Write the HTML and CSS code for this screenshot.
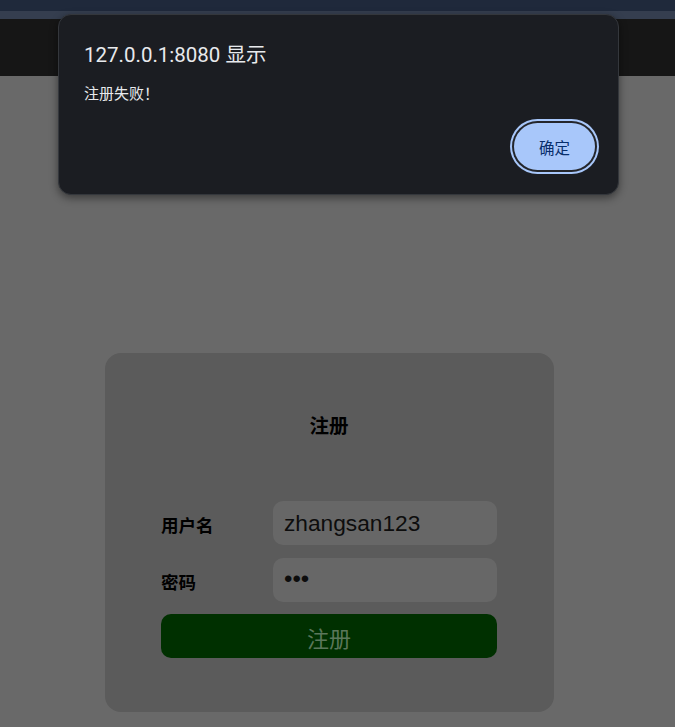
FILE: index.html
```html
<!DOCTYPE html>
<html lang="zh-CN">
<head>
<meta charset="utf-8">
<title>注册</title>
<link rel="stylesheet" href="styles.css">
</head>
<body>
  <div class="bar-top"></div>
  <div class="bar-mid"></div>
  <div class="bar-dark"></div>
  <main class="page">
    <section class="card">
      <h3 class="card-title">注册</h3>
      <div class="row">
        <label class="label">用户名</label>
        <div class="field">zhangsan123</div>
      </div>
      <div class="row">
        <label class="label">密码</label>
        <div class="field field-pass">•••</div>
      </div>
      <div class="submit">注册</div>
    </section>
  </main>

  <div class="dialog">
    <div class="dialog-title">127.0.0.1:8080 显示</div>
    <div class="dialog-msg">注册失败！</div>
    <div class="dialog-actions">
      <button class="ok">确定</button>
    </div>
  </div>
</body>
</html>
```

FILE: styles.css
```css
html, body {
  margin: 0;
  padding: 0;
}
body {
  width: 675px;
  height: 727px;
  overflow: hidden;
  background: #696969;
  font-family: "Liberation Sans", "Noto Sans CJK SC", sans-serif;
  position: relative;
}
.bar-top {
  height: 11px;
  background: #1f293b;
}
.bar-mid {
  height: 8px;
  background: #353e4f;
}
.bar-dark {
  height: 57px;
  background: #161616;
}
.page {
  height: 651px;
  background: #696969;
  padding-top: 277px;
  padding-left: 105px;
  box-sizing: border-box;
}
.card {
  width: 449px;
  height: 359px;
  box-sizing: border-box;
  background: #5b5b5b;
  border-radius: 16px;
  padding: 60px 57px 0 56px;
  display: flex;
  flex-direction: column;
}
.card-title {
  margin: 0 0 64px;
  text-align: center;
  font-family: "Noto Sans CJK SC", sans-serif;
  font-weight: 700;
  font-size: 19.5px;
  line-height: 24px;
  color: #000;
}
.row {
  display: flex;
  align-items: center;
  height: 44px;
  margin-bottom: 13px;
}
.label {
  width: 112px;
  font-family: "Noto Sans CJK SC", sans-serif;
  font-weight: 700;
  font-size: 17.5px;
  color: #000;
  padding-top: 3px;
}
.field {
  width: 224px;
  height: 44px;
  box-sizing: border-box;
  background: #676767;
  border-radius: 10px;
  padding-left: 11px;
  font-family: "Liberation Sans", sans-serif;
  font-size: 22.7px;
  line-height: 44px;
  color: #0d0d0d;
}
.field-pass {
  font-size: 24px;
  line-height: 42px;
}
.submit {
  margin-top: -1px;
  height: 44px;
  background: #003000;
  border-radius: 10px;
  text-align: center;
  font-family: "Noto Sans CJK SC", sans-serif;
  font-size: 22px;
  line-height: 46px;
  color: #5b775b;
}

.dialog {
  position: absolute;
  left: 58px;
  top: 14px;
  width: 561px;
  height: 181px;
  box-sizing: border-box;
  background: #1b1d22;
  border: 1px solid #34373c;
  border-radius: 13px;
  box-shadow: 0 3px 8px rgba(0, 0, 0, 0.45);
  padding: 25px 23px 0 25px;
  color: #e3e3e3;
}
.dialog-title {
  font-family: "Roboto", "Noto Sans CJK SC", sans-serif;
  font-size: 20.5px;
  line-height: 30px;
  color: #e8eaed;
}
.dialog-msg {
  margin-top: 12px;
  font-family: "Noto Sans CJK SC", sans-serif;
  font-size: 15px;
  line-height: 22px;
  color: #e8eaed;
}
.dialog-actions {
  display: flex;
  justify-content: flex-end;
  margin-top: 19px;
}
.ok {
  width: 81px;
  height: 47px;
  border: none;
  border-radius: 24px;
  background: #a8c7fa;
  box-shadow: 0 0 0 2px #24262b, 0 0 0 4px #a8c7fa;
  font-family: "Noto Sans CJK SC", sans-serif;
  font-size: 15.5px;
  color: #072e6b;
  padding: 0;
}
```
